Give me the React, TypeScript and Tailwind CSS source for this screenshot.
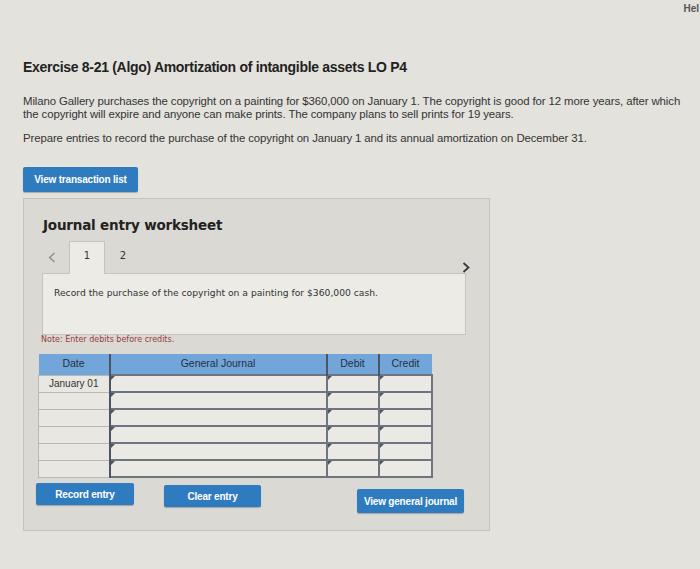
import React from 'react';

const rows = ['January 01', '', '', '', '', ''];

const Marker = () => (
  <span className="absolute left-0 top-0 w-0 h-0 border-t-[4px] border-t-[#4b5563] border-r-[4px] border-r-transparent" />
);

const BlueButton = ({ label, className }: { label: string; className: string }) => (
  <button
    className={`bg-[#2f7bc0] text-white font-bold text-[10px] tracking-[-0.2px] rounded-[2px] shadow-[0_1px_1px_rgba(0,0,0,0.25)] ${className}`}
  >
    {label}
  </button>
);

const App = () => {
  return (
    <div className="min-h-screen w-[700px] overflow-hidden bg-[#e4e2dd] font-['Liberation_Sans',Arial,sans-serif] text-[#2a2a2a]">
      <div className="flex justify-end h-[18px] pt-[1px]">
        <span className="text-[10px] font-bold text-[#555] pr-[1px]">Hel</span>
      </div>

      <div className="pl-[23px]">
        <h1 className="mt-[40px] text-[14px] font-bold tracking-[-0.3px] text-[#222] leading-[18px]">
          Exercise 8-21 (Algo) Amortization of intangible assets LO P4
        </h1>

        <p className="mt-[19px] w-[662px] text-[11.4px] leading-[13px] text-[#333] tracking-[-0.1px]">
          Milano Gallery purchases the copyright on a painting for $360,000 on January 1. The copyright is good for 12 more years, after which the copyright will expire and anyone can make prints. The company plans to sell prints for 19 years.
        </p>
        <p className="mt-[11px] whitespace-nowrap text-[11.4px] leading-[13px] text-[#333] tracking-[-0.1px]">
          Prepare entries to record the purchase of the copyright on January 1 and its annual amortization on December 31.
        </p>

        <BlueButton label="View transaction list" className="mt-[22px] w-[115px] h-[25px]" />

        <div className="mt-[6px] w-[467px] h-[333px] bg-[#dbd9d4] border border-[#c5c3be] pl-[19px] pr-[24px]">
          <h2 className="mt-[17px] font-['DejaVu_Sans',Verdana,sans-serif] font-bold text-[13.5px] leading-[18px] text-[#222] tracking-[-0.2px]">
            Journal entry worksheet
          </h2>

          <div className="mt-[8px] flex items-end h-[32px]">
            <div className="w-[26px] pl-[5px] pb-[11px]">
              <svg width="8" height="11" viewBox="0 0 8 11" fill="none" stroke="#8a8a8a" strokeWidth="1.3">
                <path d="M6.5 1 L1.5 5.5 L6.5 10" />
              </svg>
            </div>
            <div className="w-[36px] h-[33px] bg-[#ecebe6] border border-b-0 border-[#c6c4bf] flex justify-center pt-[6px] text-[10px] text-[#333] font-['DejaVu_Sans',Verdana,sans-serif] relative z-10">
              1
            </div>
            <div className="w-[36px] h-[32px] flex justify-center pt-[6px] text-[10px] text-[#333] font-['DejaVu_Sans',Verdana,sans-serif]">
              2
            </div>
            <div className="ml-auto mr-[-5px] pb-[1px]">
              <svg width="8" height="11" viewBox="0 0 8 11" fill="none" stroke="#3a3a3a" strokeWidth="1.8">
                <path d="M1.5 1 L6.5 5.5 L1.5 10" />
              </svg>
            </div>
          </div>

          <div className="mt-[-1px] ml-[-1px] w-[424px] h-[62px] bg-[#ecebe6] border border-[#c6c4bf] pl-[11px] pt-[12px] font-['DejaVu_Sans',Verdana,sans-serif] text-[9.2px] text-[#333]">
            Record the purchase of the copyright on a painting for $360,000 cash.
          </div>

          <p className="mt-[-1px] ml-[-2px] font-['DejaVu_Sans',Verdana,sans-serif] text-[8px] text-[#9a3b3b]">
            Note: Enter debits before credits.
          </p>

          <table className="mt-[8px] ml-[-5px] border-collapse text-[10px] text-[#333]">
            <thead>
              <tr className="h-[21px] bg-[#72a6da]">
                <th className="w-[71px] font-medium text-[10.5px] text-[#243040] border-r-2 border-[#4b5563]">Date</th>
                <th className="w-[217px] font-medium text-[10.5px] text-[#243040] border-r-2 border-[#4b5563]">General Journal</th>
                <th className="w-[52px] font-medium text-[10.5px] text-[#243040] border-r-2 border-[#4b5563]">Debit</th>
                <th className="w-[53px] font-medium text-[10.5px] text-[#243040]">Credit</th>
              </tr>
            </thead>
            <tbody>
              {rows.map((d, i) => (
                <tr key={i} className="h-[17px]">
                  <td className="bg-[#e9e7e2] border border-[#b9b7b2] border-r-2 border-r-[#4b5563] text-center">{d}</td>
                  <td className="relative bg-[#ebe9e4] border-2 border-[#6f7480]"><Marker /></td>
                  <td className="relative bg-[#ebe9e4] border-2 border-[#6f7480]"><Marker /></td>
                  <td className="relative bg-[#ebe9e4] border-2 border-[#6f7480]"><Marker /></td>
                </tr>
              ))}
            </tbody>
          </table>

          <div className="mt-[5px] ml-[-7px] flex items-start">
            <BlueButton label="Record entry" className="w-[98px] h-[22px]" />
            <BlueButton label="Clear entry" className="ml-[30px] mt-[2px] w-[97px] h-[22px]" />
            <BlueButton label="View general journal" className="ml-[96px] mt-[6px] w-[107px] h-[24px]" />
          </div>
        </div>
      </div>
    </div>
  );
};

export default App;
